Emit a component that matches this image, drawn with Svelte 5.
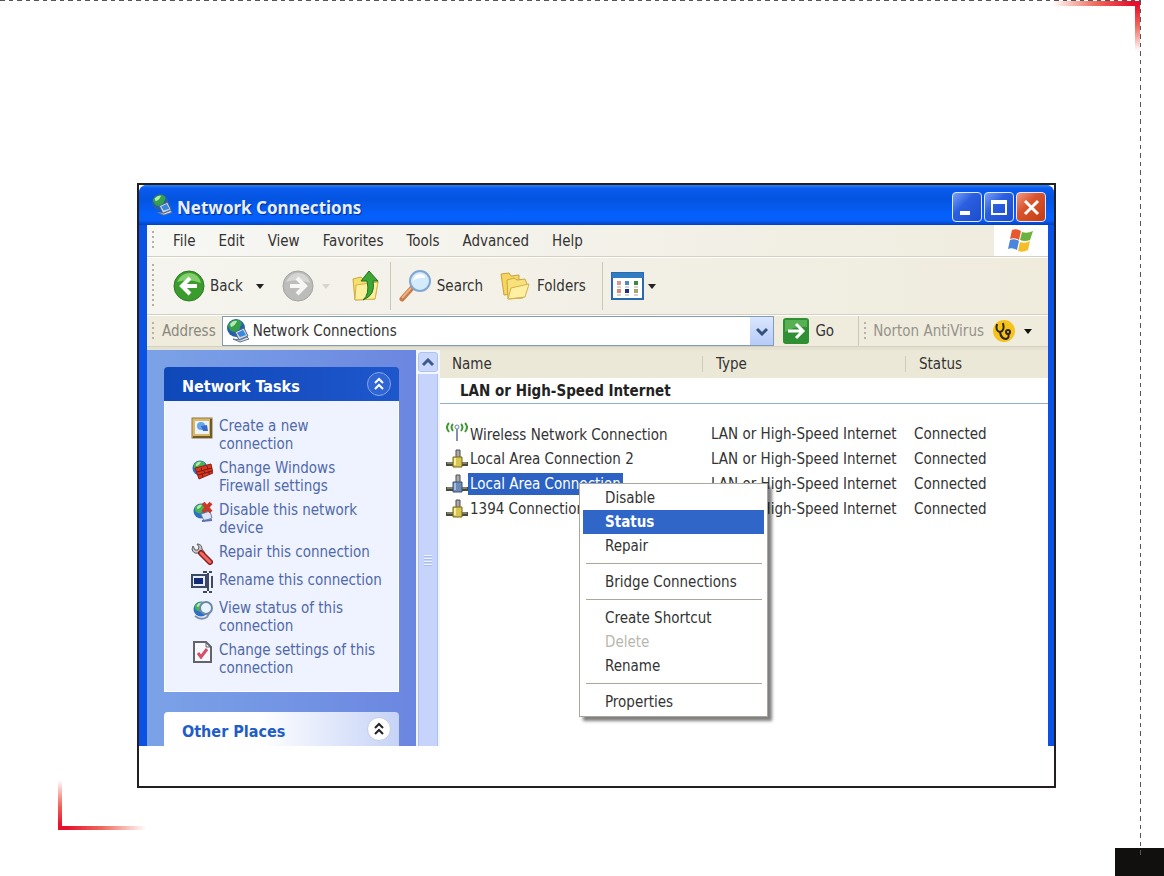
<script>
  const menus = ["File", "Edit", "View", "Favorites", "Tools", "Advanced", "Help"];

  const tasks = [
    { icon: "create", label: "Create a new connection" },
    { icon: "firewall", label: "Change Windows Firewall settings" },
    { icon: "disable", label: "Disable this network device" },
    { icon: "repair", label: "Repair this connection" },
    { icon: "rename", label: "Rename this connection" },
    { icon: "status", label: "View status of this connection" },
    { icon: "settings", label: "Change settings of this connection" },
  ];

  const connections = [
    { name: "Wireless Network Connection", wireless: true },
    { name: "Local Area Connection 2" },
    { name: "Local Area Connection" },
    { name: "1394 Connection" },
  ];

  // null is a separator
  const actions = [
    "Disable", "Status", "Repair", null,
    "Bridge Connections", null,
    "Create Shortcut", "Delete", "Rename", null,
    "Properties",
  ];

  let selected = $state(2);
  let active = $state("Status");
</script>

{#snippet globe()}
  <circle cx="9" cy="8" r="7.5" fill="#2c6fc4" />
  <path d="M3 4Q8-1 13 2Q15 5 11 7Q9 12 6 10Q2 9 3 4Z" fill="#46b452" />
  <path d="M5 4Q7 1 10 2Q8 6 5 6Z" fill="#b4ecae" />
{/snippet}

{#snippet netIcon(size)}
  <svg width={size} height={size} viewBox="0 0 24 24" aria-hidden="true">
    <circle cx="10" cy="9" r="9" fill="#2560a8" />
    <path d="M2 6Q6 0 13 1Q18 4 14 8Q14 14 8 13Q3 12 2 6Z" fill="#35a04c" />
    <path d="M4 5Q7 1 11 2Q9 7 5 8Z" fill="#b4ecae" />
    <path d="M9 13L18 9L22 17L13 21Z" fill="#c3d6ee" stroke="#50617c" />
    <path d="M11 14L17 11L20 16L14 18Z" fill="#3a86d8" />
    <path d="M7 20L14 23L23 20L21 18L14 21Z" fill="#dce2ea" stroke="#66738a" />
  </svg>
{/snippet}

{#snippet chevrons(color)}
  <svg width="12" height="14" viewBox="0 0 12 14" fill="none" stroke={color} stroke-width="2" aria-hidden="true">
    <path d="M2 6L6 2L10 6M2 12L6 8L10 12" />
  </svg>
{/snippet}

{#snippet caret(color)}
  <svg class="caret" width="8" height="5" viewBox="0 0 8 5" aria-hidden="true"><path d="M0 0H8L4 5Z" fill={color} /></svg>
{/snippet}

{#snippet taskIcon(name)}
  <svg width="22" height="22" viewBox="0 0 22 22" aria-hidden="true">
    {#if name === "create"}
      <rect x="1" y="1" width="20" height="20" fill="#d9b866" stroke="#93793c" />
      <rect x="4" y="4" width="14" height="13" fill="#eef4ff" />
      <circle cx="10" cy="9" r="4" fill="#63a5e8" />
      <path d="M10 9L16 8L17 14L12 14Z" fill="#3a69c8" />
      <path d="M2 20H20V2" fill="none" stroke="#6f5b28" stroke-width="2" />
    {:else if name === "firewall"}
      <g transform="translate(0 1)">{@render globe()}</g>
      <path d="M4 9L20 5L22 14L8 20Z" fill="#d8371e" stroke="#8c2413" />
      <path d="M6 13L21 9M7 16L21 12M10 9L11 12M16 7L17 10M13 12L14 14M11 15L12 18M18 12L18 15" stroke="#7b1a10" fill="none" />
    {:else if name === "disable"}
      <g transform="translate(1 2)">{@render globe()}</g>
      <path d="M10 13L19 10L21 17L13 20Z" fill="#dbe4f5" stroke="#7380a4" />
      <path d="M11 20L21 19" stroke="#5c6fae" stroke-width="2" />
      <path d="M12 2L20 11M20 2L12 11" stroke="#c83a26" stroke-width="4" />
    {:else if name === "repair"}
      <path d="M2 3L4 7L7 7L8 4L6 1Q11 1 11 6L14 10L10 12L7 10Q2 11 1 6Z" fill="#c6c6c6" stroke="#5e5e5e" />
      <path d="M10 10L19 19" stroke="#8f1f1f" stroke-width="6" stroke-linecap="round" />
      <path d="M10 10L19 19" stroke="#ee6a62" stroke-width="3" stroke-linecap="round" />
    {:else if name === "rename"}
      <rect x="1" y="4" width="14" height="12" fill="#e8ecf4" stroke="#3b4a68" stroke-width="2" />
      <rect x="3" y="7" width="9" height="6" fill="#122c78" />
      <path d="M12 1H16M18 1H21M12 21H16M18 21H21M17 2V20M21 5V17" stroke="#414a5c" stroke-width="2" fill="none" />
    {:else if name === "status"}
      <g transform="translate(1 2)">{@render globe()}</g>
      <path d="M4 17Q10 22 16 18L20 11" fill="none" stroke="#7f93ae" stroke-width="2" />
      <circle cx="15" cy="9" r="6" fill="#e8f4ff" stroke="#6d87a8" stroke-width="2" />
    {:else}
      <path d="M3 1H15L20 6V21H3Z" fill="#f8f9fc" stroke="#61646c" stroke-width="2" />
      <path d="M15 1V6H20" fill="none" stroke="#61646c" />
      <path d="M7 12L10 16L16 8" fill="none" stroke="#d25068" stroke-width="3" />
    {/if}
  </svg>
{/snippet}

{#snippet connIcon(wireless, picked)}
  <svg class="conn" class:wireless width="22" height="20" viewBox="0 0 22 20" fill="none" aria-hidden="true">
    {#if wireless}
      <path d="M3 1Q-1 5 3 10M7 2Q4 5 7 9M19 1Q23 5 19 10M15 2Q18 5 15 9" stroke="#3f9a32" stroke-width="2" />
      <circle cx="11" cy="5" r="2" stroke="#6684a8" />
      <path d="M11 7V19" stroke="#7f93ae" stroke-width="2" />
    {:else}
      <path d="M0 15H22" stroke="#4a4a3a" stroke-width="4" />
      <path d="M1 14H21" stroke="#b5b5a5" stroke-width="1" />
      <path d="M10 1H14V9H10Z" fill="#aaa" stroke="#4e4e4e" />
      <path d="M7 8H16V18H7Z" fill={picked ? "#6f8bb5" : "#d8c650"} stroke={picked ? "#34507e" : "#75661a"} />
      <path d="M9 9V16" stroke={picked ? "#a9bddb" : "#f6eea0"} stroke-width="2" />
    {/if}
  </svg>
{/snippet}

<div class="page">
  <span class="rule top"></span>
  <span class="corner upper"></span>
  <span class="corner lower"></span>

  <figure>
    <div class="window">
      <header class="titlebar">
        {@render netIcon(22)}
        <h1>Network Connections</h1>
        <div class="controls">
          <button aria-label="Minimize">
            <svg width="26" height="26" viewBox="0 0 26 26"><path d="M6 19H16" stroke="#fff" stroke-width="4" /></svg>
          </button>
          <button aria-label="Maximize">
            <svg width="26" height="26" viewBox="0 0 26 26" fill="none" stroke="#fff"><path d="M6 8H20V20H6Z" stroke-width="2" /><path d="M5 8H21" stroke-width="4" /></svg>
          </button>
          <button class="close" aria-label="Close">
            <svg width="26" height="26" viewBox="0 0 26 26"><path d="M7 7L20 20M20 7L7 20" stroke="#fff" stroke-width="3" /></svg>
          </button>
        </div>
      </header>

      <div class="frame">
        <nav class="menubar">
          <span class="grip"></span>
          {#each menus as m}
            <button>{m}</button>
          {/each}
          <span class="flag">
            <svg width="28" height="26" viewBox="0 0 28 26" aria-hidden="true">
              <path d="M5 2Q9 0 14 3L12 12Q7 9 3 11Z" fill="#e8582c" />
              <path d="M15 4Q20 6 26 3L23 12Q18 14 13 12Z" fill="#6cb33e" />
              <path d="M3 12Q7 10 12 13L10 22Q5 19 1 21Z" fill="#4a86dc" />
              <path d="M13 14Q18 16 23 13L21 22Q16 25 11 23Z" fill="#f4be2a" />
            </svg>
          </span>
        </nav>

        <div class="toolbar">
          <span class="grip"></span>
          <button class="back">
            <svg width="32" height="32" viewBox="0 0 32 32" aria-hidden="true">
              <circle cx="16" cy="16" r="15" fill="#3a9c2c" stroke="#2d7a25" />
              <path d="M4 12Q8 3 17 3Q26 4 28 13Q16 8 4 12Z" fill="#83cf6c" />
              <path d="M24 16H10M17 8L9 16L17 24" fill="none" stroke="#fff" stroke-width="4" />
            </svg>
            Back
            {@render caret("#222")}
          </button>
          <button class="forward" aria-label="Forward" disabled>
            <svg width="32" height="32" viewBox="0 0 32 32" aria-hidden="true">
              <circle cx="16" cy="16" r="15" fill="#bcbcba" stroke="#a3a3a1" />
              <path d="M4 12Q8 3 17 3Q26 4 28 13Q16 8 4 12Z" fill="#d6d6d4" />
              <path d="M8 16H22M15 8L23 16L15 24" fill="none" stroke="#f6f6f4" stroke-width="4" />
            </svg>
            {@render caret("#d8d5cb")}
          </button>
          <button class="up" aria-label="Up">
            <svg width="28" height="32" viewBox="0 0 28 32" aria-hidden="true">
              <path d="M1 9L9 7L12 10L22 8L26 11L23 29L3 30Z" fill="#f6df6d" stroke="#cda83a" />
              <path d="M4 15L26 12L23 29L3 30Z" fill="#fbef9e" stroke="#d4b44a" />
              <path d="M11 30Q18 24 15 11H9L17 1L26 11H21Q24 25 11 30Z" fill="#3da636" stroke="#227420" />
            </svg>
          </button>
          <span class="divider"></span>
          <button class="search">
            <svg width="34" height="34" viewBox="0 0 34 34" aria-hidden="true">
              <path d="M3 30L13 19" stroke="#c87b47" stroke-width="5" stroke-linecap="round" />
              <path d="M3 29L12 19" stroke="#eeb083" stroke-width="2" />
              <circle cx="21" cy="12" r="10" fill="#d3ebfb" stroke="#83a6d0" stroke-width="2" />
              <path d="M14 12Q15 5 22 5Q27 6 26 9Q19 8 14 12Z" fill="#fff" />
            </svg>
            Search
          </button>
          <button class="folders">
            <svg width="32" height="30" viewBox="0 0 32 30" aria-hidden="true">
              <path d="M2 3L10 2L12 5L20 4V22L5 24Z" fill="#f4d661" stroke="#c9a23a" />
              <path d="M8 9L15 7L18 9L26 8L28 13L24 27L9 28Z" fill="#f8e07a" stroke="#cda53d" />
              <path d="M12 17L30 13L26 26L9 28Z" fill="#fdf0a2" stroke="#d4b04a" />
            </svg>
            Folders
          </button>
          <span class="divider"></span>
          <button class="views" aria-label="Views">
            <svg width="33" height="28" viewBox="0 0 33 28" aria-hidden="true">
              <rect x="1" y="1" width="31" height="26" fill="#fff" stroke="#2a6aa8" stroke-width="2" />
              <rect x="1" y="1" width="31" height="5" fill="#2f7cc4" />
              <path d="M6 9H10V13H6Z" fill="#d49a92" /><path d="M14 9H18V13H14Z" fill="#5287be" /><path d="M23 9H27V13H23Z" fill="#3b8c34" />
              <path d="M6 17H10V21H6Z" fill="#d98a78" /><path d="M14 17H18V21H14Z" fill="#1c2f8c" /><path d="M23 17H27V21H23Z" fill="#a8a46a" />
              <path d="M6 15H10M14 15H18M23 15H27M6 23H10M14 23H18M23 23H27" stroke="#a9a9a9" />
            </svg>
            {@render caret("#222")}
          </button>
        </div>

        <div class="addressbar">
          <span class="grip"></span>
          <label for="address">Address</label>
          <div class="combo">
            {@render netIcon(24)}
            <select id="address">
              <option>Network Connections</option>
            </select>
            <span class="drop">
              <svg width="12" height="9" viewBox="0 0 12 9" fill="none" stroke="#34507e" stroke-width="3" aria-hidden="true"><path d="M1 2L6 7L11 2" /></svg>
            </span>
          </div>
          <button class="go">
            <svg width="26" height="26" viewBox="0 0 26 26" aria-hidden="true">
              <rect width="26" height="26" rx="3" fill="#2f8f33" />
              <path d="M2 2H24V9Q12 8 2 14Z" fill="#58b055" />
              <path d="M5 13H19M13 6L20 13L13 20" fill="none" stroke="#fff" stroke-width="3" />
            </svg>
            Go
          </button>
          <div class="norton">
            <span class="grip"></span>
            <button>
              Norton AntiVirus
              <svg width="24" height="24" viewBox="0 0 24 24" aria-hidden="true">
                <circle cx="12" cy="12" r="11" fill="#f5c31c" />
                <path d="M5 5Q3 12 8 13Q13 12 11 4M8 13Q9 20 14 20Q18 19 16 14" fill="none" stroke="#2e2410" stroke-width="2" />
                <circle cx="16" cy="13" r="2" fill="#f5c31c" stroke="#2e2410" stroke-width="2" />
              </svg>
              {@render caret("#111")}
            </button>
          </div>
        </div>

        <div class="content">
          <aside>
            <section>
              <h2 class="primary">
                <span>Network Tasks</span>
                <button aria-label="Collapse Network Tasks">{@render chevrons("#fff")}</button>
              </h2>
              <ul>
                {#each tasks as t}
                  <li>
                    {@render taskIcon(t.icon)}
                    <a href="#{t.icon}">{t.label}</a>
                  </li>
                {/each}
              </ul>
            </section>
            <section>
              <h2>
                <span>Other Places</span>
                <button aria-label="Collapse Other Places">{@render chevrons("#222")}</button>
              </h2>
            </section>
          </aside>

          <div class="scrollbar">
            <button aria-label="Scroll up">
              <svg width="12" height="9" viewBox="0 0 12 9" fill="none" stroke="#40598c" stroke-width="3" aria-hidden="true"><path d="M1 7L6 2L11 7" /></svg>
            </button>
            <span class="thumb"><i></i></span>
          </div>

          <main>
            <table>
              <colgroup><col class="c-name" /><col class="c-type" /><col /></colgroup>
              <thead>
                <tr><th>Name</th><th>Type</th><th>Status</th></tr>
              </thead>
              <tbody>
                <tr class="group"><th colspan="3">LAN or High-Speed Internet</th></tr>
                {#each connections as c, i}
                  <tr class:selected={i === selected} onclick={() => (selected = i)}>
                    <td class="name">{@render connIcon(c.wireless, i === selected)}<span>{c.name}</span></td>
                    <td>LAN or High-Speed Internet</td>
                    <td>Connected</td>
                  </tr>
                {/each}
              </tbody>
            </table>

            <div class="context" role="menu">
              {#each actions as a}
                {#if a === null}
                  <hr />
                {:else}
                  <button
                    role="menuitem"
                    class:active={a === active}
                    disabled={a === "Delete"}
                    onmouseenter={() => (active = a)}>{a}</button>
                {/if}
              {/each}
            </div>
          </main>
        </div>
      </div>
    </div>
  </figure>

  <div class="tab"></div>
</div>

<style>
  :global(body) {
    margin: 0;
    background: #fff;
  }

  .page {
    position: relative;
    display: flex;
    flex-direction: column;
    box-sizing: border-box;
    min-height: 100vh;
    padding-top: 183px;
    font-family: "DejaVu Sans Condensed", "DejaVu Sans", sans-serif;
    font-size: 15px;
    line-height: 18px;
    color: #333;
  }

  button,
  select {
    font: inherit;
    color: inherit;
    background: none;
    border: 0;
    padding: 0;
    margin: 0;
  }

  svg {
    display: block;
    flex: none;
  }

  /* dashed trim lines */
  .rule,
  .page::after {
    content: "";
    position: absolute;
    top: 0;
    right: 23px;
  }

  .rule {
    left: 0;
    height: 1px;
    background: repeating-linear-gradient(90deg, #555 0 5px, #fff 5px 9px, #555 9px 13px, #fff 13px 17px);
  }

  .page::after {
    bottom: 17px;
    width: 1px;
    background: repeating-linear-gradient(#555 0 5px, transparent 5px 9px, #555 9px 13px, transparent 13px 17px);
  }

  .corner {
    position: absolute;
    background-repeat: no-repeat;
  }

  .corner.upper {
    top: 1px;
    right: 24px;
    width: 88px;
    height: 50px;
    background-image: linear-gradient(270deg, #e8112d 10%, #f0695c 50%, #fff), linear-gradient(#e8112d 10%, #f0695c 50%, #fff);
    background-size: 100% 5px, 5px 100%;
    background-position: top right;
  }

  .corner.lower {
    bottom: 46px;
    left: 58px;
    width: 88px;
    height: 50px;
    background-image: linear-gradient(90deg, #e8112d 10%, #f0695c 50%, #fff), linear-gradient(0deg, #e8112d 10%, #f0695c 50%, #fff);
    background-size: 100% 4px, 4px 100%;
    background-position: bottom left;
  }

  .tab {
    width: 49px;
    height: 28px;
    margin-top: auto;
    margin-left: auto;
    background: #12100e;
  }

  figure {
    margin: 0 108px 0 137px;
    padding-bottom: 40px;
    border: 2px solid #231f20;
  }

  .window {
    background: #0a51e4;
    border-radius: 8px 8px 0 0;
  }

  .titlebar {
    display: flex;
    align-items: center;
    gap: 4px;
    height: 40px;
    padding: 0 8px 0 12px;
    background: linear-gradient(#2b84f5 0, #0a5cf0 8%, #0453e0 35%, #0560fb 75%, #0560fb 88%, #0341bd);
    border-radius: 8px 8px 0 0;
  }

  h1 {
    flex: 1;
    margin: 0;
    padding-top: 6px;
    font: bold 17px/22px "Noto Sans", "Open Sans", sans-serif;
    color: #e8f0ff;
    text-shadow: 1px 1px 1px #0a2f8c;
  }

  .controls {
    display: flex;
    gap: 2px;
    padding-top: 4px;
  }

  .controls button {
    width: 30px;
    height: 30px;
    padding: 1px;
    border: 1px solid #dfe8ff;
    border-radius: 4px;
    background: linear-gradient(135deg, #7ba1f6, #2b5fe0 40%, #1b4ccf);
  }

  .controls .close {
    background: linear-gradient(135deg, #f09a82, #d9532c 40%, #c23c14);
  }

  .frame {
    margin: 0 6px 0 8px;
    background: #efecde;
  }

  .menubar,
  .toolbar,
  .addressbar {
    display: flex;
    align-items: center;
    box-sizing: border-box;
    border-bottom: 1px solid #d5d1c0;
  }

  .grip {
    flex: none;
    width: 2px;
    margin-left: 5px;
    align-self: stretch;
    margin-top: 6px;
    margin-bottom: 6px;
    background: repeating-linear-gradient(#b4b0a2 0 2px, transparent 2px 5px);
  }

  .menubar {
    gap: 23px;
    height: 32px;
    background: linear-gradient(90deg, #f7f7f4, #efecde);
  }

  .menubar .grip {
    margin-right: -4px;
  }

  .flag {
    display: flex;
    justify-content: center;
    align-items: center;
    align-self: stretch;
    width: 54px;
    margin-left: auto;
    background: #fff;
  }

  .toolbar {
    height: 58px;
    border-top: 1px solid #fff;
    background: linear-gradient(90deg, #f5f4ee, #efecde);
  }

  .toolbar button {
    display: flex;
    align-items: center;
  }

  .back {
    gap: 5px;
    margin-left: 19px;
  }

  .back .caret,
  .forward .caret {
    margin-left: 8px;
  }

  .forward {
    margin-left: 18px;
  }

  .up {
    margin-left: 22px;
  }

  .divider {
    align-self: stretch;
    width: 1px;
    margin: 4px 8px 4px 10px;
    background: #cbc8b8;
  }

  .search {
    gap: 4px;
  }

  .folders {
    gap: 6px;
    margin-left: 16px;
    margin-right: 6px;
  }

  .views {
    gap: 4px;
  }

  .addressbar {
    height: 32px;
    border-top: 1px solid #fff;
  }

  label {
    margin: 0 6px 0 8px;
    color: #8a887e;
  }

  .combo {
    display: flex;
    flex: 1;
    align-items: center;
    align-self: stretch;
    padding-left: 3px;
    background: #fff;
    border: 1px solid #7f9db9;
  }

  select {
    flex: 1;
    padding-left: 3px;
    appearance: none;
  }

  .drop {
    display: flex;
    align-items: center;
    justify-content: center;
    align-self: stretch;
    width: 23px;
    background: linear-gradient(#dbe6fe, #b7cbf8);
  }

  .go {
    display: flex;
    align-items: center;
    gap: 6px;
    margin: 0 24px 0 9px;
  }

  .norton {
    display: flex;
    align-items: center;
    align-self: stretch;
    padding-right: 16px;
    border-left: 1px solid #cbc8b8;
  }

  .norton button {
    display: flex;
    align-items: center;
    gap: 8px;
    margin-left: 7px;
    color: #95938a;
  }

  .content {
    display: flex;
    border-top: 3px solid #e4e1d2;
  }

  aside {
    flex: none;
    box-sizing: border-box;
    width: 269px;
    padding: 17px 17px 0;
    background: linear-gradient(90deg, #7ba2e7, #7395e4 50%, #6b86e0);
  }

  section + section {
    margin-top: 20px;
  }

  h2 {
    display: flex;
    align-items: center;
    justify-content: space-between;
    height: 34px;
    margin: 0;
    padding: 0 8px 0 18px;
    font-size: 16px;
    line-height: 18px;
    color: #215dc6;
    background: linear-gradient(90deg, #fff 40%, #c6d3f7);
    border-radius: 4px 4px 0 0;
  }

  h2 span {
    padding-top: 5px;
  }

  h2.primary {
    color: #fff;
    background: linear-gradient(90deg, #0f48b8, #1e56cc);
  }

  h2 button {
    display: flex;
    align-items: center;
    justify-content: center;
    width: 24px;
    height: 24px;
    border-radius: 50%;
    background: #fff;
    border: 1px solid #c4cce4;
  }

  h2.primary button {
    background: #2f66d4;
    border-color: #87a6ea;
  }

  ul {
    display: flex;
    flex-direction: column;
    gap: 6px;
    margin: 0;
    padding: 16px 4px 14px 26px;
    list-style: none;
    background: #eff3ff;
    border: solid #fff;
    border-width: 0 1px 1px;
  }

  li {
    display: flex;
    gap: 6px;
    min-height: 22px;
  }

  a {
    color: #5069a8;
    text-decoration: none;
  }

  li:nth-child(-n + 3) a,
  li:nth-child(6) a {
    max-width: 145px;
  }

  .scrollbar {
    display: flex;
    flex-direction: column;
    flex: none;
    box-sizing: border-box;
    width: 24px;
    padding: 2px;
    background: #f4f6fd;
  }

  .scrollbar button {
    display: flex;
    align-items: center;
    justify-content: center;
    height: 20px;
    background: #c9d7fb;
    border: 1px solid #b0c2f0;
    border-radius: 3px;
  }

  .thumb {
    display: flex;
    flex: 1;
    align-items: center;
    justify-content: center;
    margin: 2px 0 -2px;
    background: #c6d3fa;
    border-left: 1px solid #aebff0;
    border-right: 1px solid #aebff0;
  }

  .thumb i {
    width: 8px;
    height: 11px;
    background: repeating-linear-gradient(#eef3ff 0 1px, #a9bdf2 1px 2px, transparent 2px 3px);
  }

  main {
    position: relative;
    flex: 1;
    background: #fff;
  }

  table {
    width: 100%;
    table-layout: fixed;
    border-collapse: collapse;
  }

  .c-name {
    width: 262px;
  }

  .c-type {
    width: 203px;
  }

  th,
  td {
    height: 25px;
    padding: 0 0 0 9px;
    text-align: left;
    white-space: nowrap;
  }

  thead th {
    height: 28px;
    padding-left: 14px;
    font-weight: normal;
    background: linear-gradient(90deg, #cfccbc 1px, transparent 1px) 0 center / 100% 16px no-repeat, #ebe8d8;
  }

  thead th:first-child {
    padding-left: 12px;
    background: #ebe8d8;
  }

  .group th {
    padding-left: 20px;
    color: #222;
    border-bottom: 1px solid #8fb0cc;
  }

  .group + tr td {
    padding-top: 17px;
  }

  td.name {
    padding-left: 6px;
  }

  .conn {
    display: inline-block;
    vertical-align: middle;
  }

  .conn.wireless {
    vertical-align: -2px;
  }

  .name span {
    display: inline-block;
    padding: 2px 2px;
  }

  .selected span {
    color: #fff;
    background: #2b62c4;
  }

  .context {
    position: absolute;
    top: 133px;
    left: 139px;
    display: flex;
    flex-direction: column;
    box-sizing: border-box;
    width: 189px;
    padding: 2px 3px;
    background: #fff;
    border: 1px solid #aca899;
    box-shadow: 4px 4px 3px rgba(0, 0, 0, 0.5);
  }

  .context button {
    height: 24px;
    padding-left: 22px;
    text-align: left;
  }

  .context .active {
    font-weight: bold;
    color: #fff;
    background: #2f66c8;
  }

  .context button:disabled {
    color: #b9b7ad;
  }

  hr {
    width: 176px;
    height: 1px;
    margin: 5px auto 6px;
    border: 0;
    background: #aca899;
  }
</style>
